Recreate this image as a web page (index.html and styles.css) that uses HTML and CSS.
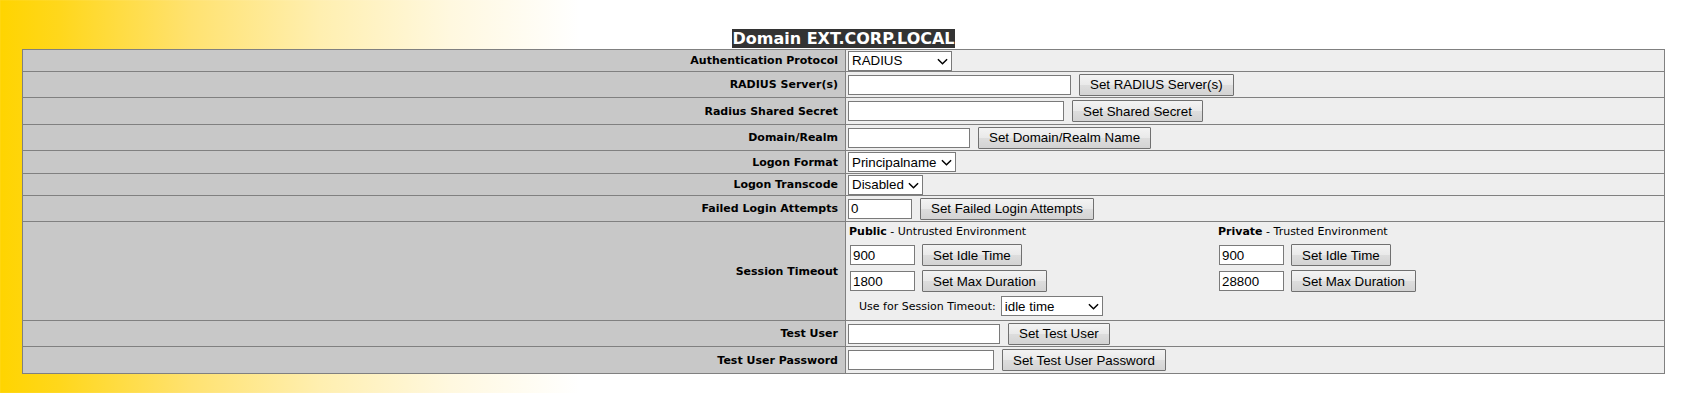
FILE: index.html
```html
<!DOCTYPE html>
<html lang="en">
<head>
    <meta charset="UTF-8">
    <meta name="viewport" content="width=device-width, initial-scale=1.0">
    <title>Domain EXT.CORP.LOCAL</title>
    <link rel="stylesheet" href="styles.css">
</head>
<body>
    <!-- honeycomb texture on the yellow backdrop -->
    <svg class="honeycomb" width="620" height="393">
        <defs>
            <pattern id="hex" width="30" height="52" patternUnits="userSpaceOnUse">
                <path d="M15 1l13 7.5v15L15 31 2 23.5v-15z M0 27.5v15L-13 50 M30 27.5v15L43 50 M2 49.5L15 57 28 49.5" />
            </pattern>
            <linearGradient id="fade" x1="0" x2="1" y1="0" y2="0">
                <stop offset="0" stop-color="#fff"/>
                <stop offset="0.5" stop-color="#fff" stop-opacity="0.7"/>
                <stop offset="1" stop-color="#fff" stop-opacity="0"/>
            </linearGradient>
            <mask id="fade-mask">
                <rect width="620" height="393" fill="url(#fade)"/>
            </mask>
        </defs>
        <rect width="620" height="393" fill="url(#hex)" mask="url(#fade-mask)"/>
    </svg>

    <div class="page">
        <table class="settings">
            <caption><span class="caption-text">Domain EXT.CORP.LOCAL</span></caption>
            <tr class="row-22">
                <th>Authentication Protocol</th>
                <td>
                    <span class="select-wrap sel-protocol">
                        <select><option>RADIUS</option><option>LDAP</option></select>
                        <svg class="chevron" viewBox="0 0 12 7"><path d="M1 1l5 5 5-5"/></svg>
                    </span>
                </td>
            </tr>
            <tr class="row-26">
                <th>RADIUS Server(s)</th>
                <td>
                    <div class="field">
                        <input type="text" class="in-server">
                        <button class="btn">Set RADIUS Server(s)</button>
                    </div>
                </td>
            </tr>
            <tr class="row-27">
                <th>Radius Shared Secret</th>
                <td>
                    <div class="field">
                        <input type="password" class="in-secret">
                        <button class="btn">Set Shared Secret</button>
                    </div>
                </td>
            </tr>
            <tr class="row-26">
                <th>Domain/Realm</th>
                <td>
                    <div class="field">
                        <input type="text" class="in-realm">
                        <button class="btn">Set Domain/Realm Name</button>
                    </div>
                </td>
            </tr>
            <tr class="row-23">
                <th>Logon Format</th>
                <td>
                    <span class="select-wrap sel-format">
                        <select><option>Principalname</option><option>Username</option></select>
                        <svg class="chevron" viewBox="0 0 12 7"><path d="M1 1l5 5 5-5"/></svg>
                    </span>
                </td>
            </tr>
            <tr class="row-22">
                <th>Logon Transcode</th>
                <td>
                    <span class="select-wrap sel-transcode">
                        <select><option>Disabled</option><option>Enabled</option></select>
                        <svg class="chevron" viewBox="0 0 12 7"><path d="M1 1l5 5 5-5"/></svg>
                    </span>
                </td>
            </tr>
            <tr class="row-26">
                <th>Failed Login Attempts</th>
                <td>
                    <div class="field">
                        <input type="text" class="in-attempts" value="0">
                        <button class="btn">Set Failed Login Attempts</button>
                    </div>
                </td>
            </tr>
            <tr class="row-99">
                <th>Session Timeout</th>
                <td class="session">
                    <div class="session-grid">
                        <div class="env">
                            <div class="env-title"><b>Public</b> - Untrusted Environment</div>
                            <div class="field field-tight">
                                <input type="text" class="in-time" value="900">
                                <button class="btn">Set Idle Time</button>
                            </div>
                            <div class="field field-tight">
                                <input type="text" class="in-time" value="1800">
                                <button class="btn">Set Max Duration</button>
                            </div>
                            <div class="use-for">
                                <span>Use for Session Timeout:</span>
                                <span class="select-wrap sel-usefor">
                                    <select><option>idle time</option><option>max duration</option></select>
                                    <svg class="chevron" viewBox="0 0 12 7"><path d="M1 1l5 5 5-5"/></svg>
                                </span>
                            </div>
                        </div>
                        <div class="env">
                            <div class="env-title"><b>Private</b> - Trusted Environment</div>
                            <div class="field field-tight">
                                <input type="text" class="in-time" value="900">
                                <button class="btn">Set Idle Time</button>
                            </div>
                            <div class="field field-tight">
                                <input type="text" class="in-time" value="28800">
                                <button class="btn">Set Max Duration</button>
                            </div>
                        </div>
                    </div>
                </td>
            </tr>
            <tr class="row-26">
                <th>Test User</th>
                <td>
                    <div class="field">
                        <input type="text" class="in-user">
                        <button class="btn">Set Test User</button>
                    </div>
                </td>
            </tr>
            <tr class="row-27">
                <th>Test User Password</th>
                <td>
                    <div class="field">
                        <input type="password" class="in-password">
                        <button class="btn">Set Test User Password</button>
                    </div>
                </td>
            </tr>
        </table>
    </div>
</body>
</html>
```

FILE: styles.css
```css
html, body {
    margin: 0;
}
body {
    position: relative;
    font-family: "DejaVu Sans", Verdana, sans-serif;
    background: linear-gradient(to right, #ffd400 0, #ffd71c 60px, #ffe270 190px, #ffefb0 320px, #fff8df 450px, #ffffff 580px);
}
.honeycomb {
    position: absolute;
    top: 0;
    left: 0;
    fill: #fff;
    fill-opacity: 0.1;
    stroke: #fff;
    stroke-opacity: 0.28;
    stroke-width: 1.5;
}
.page {
    position: relative;
    padding: 29px 0 19px 22px;
}
.settings {
    width: 1643px;
    border-collapse: collapse;
    border: 1px solid #808080;
}
.settings caption {
    text-align: center;
    line-height: 20px;
}
.caption-text {
    background-color: #333;
    color: #fff;
    font-weight: bold;
    font-size: 16px;
}
.settings th {
    width: 815px;
    padding: 0 7px 0 0;
    text-align: right;
    font-size: 11px;
    font-weight: bold;
    color: #000;
    background-color: #c8c8c8;
    border: 1px solid #808080;
}
.settings td {
    padding: 0 2px;
    background-color: #eee;
    border: 1px solid #808080;
    vertical-align: middle;
}
.row-22 { height: 22px; }
.row-23 { height: 23px; }
.row-26 { height: 26px; }
.row-27 { height: 27px; }
.row-99 { height: 99px; }

.field {
    display: flex;
    align-items: center;
    gap: 8px;
}
.field-tight {
    gap: 7px;
}
input {
    box-sizing: border-box;
    height: 20px;
    padding: 0 2px;
    border: 1px solid #7a7a7a;
    background: #fff;
    font: 13.33px "Liberation Sans", Arial, sans-serif;
    color: #000;
}
.in-server { width: 223px; }
.in-secret { width: 216px; }
.in-realm { width: 122px; }
.in-attempts { width: 64px; }
.in-time { width: 65px; }
.in-user { width: 152px; }
.in-password { width: 146px; }

.btn {
    box-sizing: border-box;
    height: 22px;
    padding: 0 10px;
    border: 1px solid #707070;
    border-radius: 1px;
    background: linear-gradient(#f3f3f3, #e9e9e9 50%, #dddddd 51%, #d3d3d3);
    font: 13.33px "Liberation Sans", Arial, sans-serif;
    color: #000;
}

.select-wrap {
    position: relative;
    display: inline-block;
    vertical-align: middle;
}
.select-wrap select {
    appearance: none;
    -webkit-appearance: none;
    box-sizing: border-box;
    width: 100%;
    height: 20px;
    padding: 0 0 0 3px;
    border: 1px solid #7a7a7a;
    border-radius: 0;
    background: #fff;
    font: 13.33px "Liberation Sans", Arial, sans-serif;
    color: #000;
    display: block;
}
.chevron {
    position: absolute;
    right: 4px;
    top: 7px;
    width: 11px;
    height: 7px;
    fill: none;
    stroke: #000;
    stroke-width: 1.6;
    pointer-events: none;
}
.sel-protocol { width: 104px; }
.sel-format { width: 108px; }
.sel-transcode { width: 75px; }
.sel-usefor { width: 102px; }

.settings td.session {
    padding: 3px 2px 2px 3px;
    vertical-align: top;
}
.session-grid {
    display: grid;
    grid-template-columns: 369px auto;
}
.env {
    display: flex;
    flex-direction: column;
    gap: 4px;
}
.env-title {
    font-size: 11px;
    line-height: 14px;
    margin-bottom: 1px;
    color: #000;
}
.env .field {
    padding-left: 1px;
}
.use-for {
    display: flex;
    align-items: center;
    gap: 5px;
    padding-left: 10px;
    font-size: 11px;
}
```
